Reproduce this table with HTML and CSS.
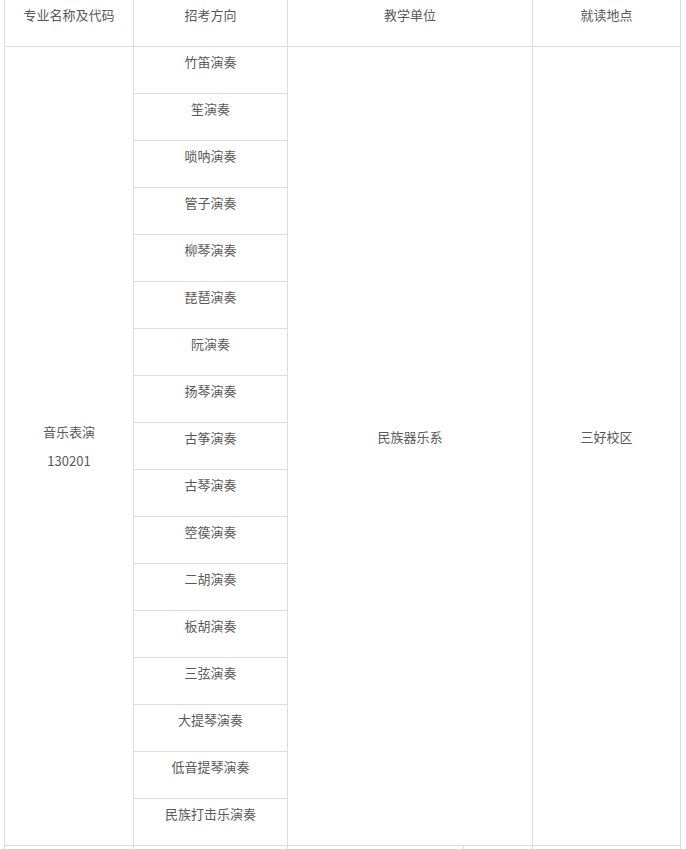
FILE: index.html
```html
<!DOCTYPE html>
<html lang="zh">
<head>
<meta charset="utf-8">
<title>招考专业</title>
<link rel="stylesheet" href="styles.css">
</head>
<body>
<table class="grid">
  <colgroup>
    <col class="c1"><col class="c2"><col class="c3a"><col class="c3b"><col class="c4">
  </colgroup>
  <tr>
    <th class="cell">专业名称及代码</th>
    <th class="cell">招考方向</th>
    <th class="cell" colspan="2">教学单位</th>
    <th class="cell">就读地点</th>
  </tr>
  <tr>
    <td class="span-cell major" rowspan="17"><div class="ln">音乐表演</div><div class="ln">130201</div></td>
    <td class="cell">竹笛演奏</td>
    <td class="span-cell single" rowspan="17" colspan="2">民族器乐系</td>
    <td class="span-cell single" rowspan="17">三好校区</td>
  </tr>
  <tr><td class="cell">笙演奏</td></tr>
  <tr><td class="cell">唢呐演奏</td></tr>
  <tr><td class="cell">管子演奏</td></tr>
  <tr><td class="cell">柳琴演奏</td></tr>
  <tr><td class="cell">琵琶演奏</td></tr>
  <tr><td class="cell">阮演奏</td></tr>
  <tr><td class="cell">扬琴演奏</td></tr>
  <tr><td class="cell">古筝演奏</td></tr>
  <tr><td class="cell">古琴演奏</td></tr>
  <tr><td class="cell">箜篌演奏</td></tr>
  <tr><td class="cell">二胡演奏</td></tr>
  <tr><td class="cell">板胡演奏</td></tr>
  <tr><td class="cell">三弦演奏</td></tr>
  <tr><td class="cell">大提琴演奏</td></tr>
  <tr><td class="cell">低音提琴演奏</td></tr>
  <tr><td class="cell">民族打击乐演奏</td></tr>
  <tr>
    <td class="cell"></td><td class="cell"></td><td class="cell"></td><td class="cell"></td><td class="cell"></td>
  </tr>
</table>
</body>
</html>
```
FILE: styles.css
```css
html, body {
  margin: 0;
  padding: 0;
  background: #fff;
}
body {
  font-family: "Noto Sans CJK SC", "Microsoft YaHei", sans-serif;
  font-size: 13px;
  color: #595959;
}
.grid {
  border-collapse: collapse;
  table-layout: fixed;
  width: 677px;
  margin: -1px 0 0 4px;
}
.c1 { width: 129px; }
.c2 { width: 154px; }
.c3a { width: 176px; }
.c3b { width: 69px; }
.c4 { width: 148px; }
.cell {
  border: 1px solid #dddddd;
  height: 46px;
  padding: 5px 0 21px;
  box-sizing: border-box;
  line-height: 20px;
  text-align: center;
  vertical-align: top;
  font-weight: normal;
}
.span-cell {
  border: 1px solid #dddddd;
  text-align: center;
  vertical-align: middle;
  padding: 0;
}
.single {
  line-height: 20px;
  padding-bottom: 18px;
}
.major .ln {
  line-height: 29px;
}
```
